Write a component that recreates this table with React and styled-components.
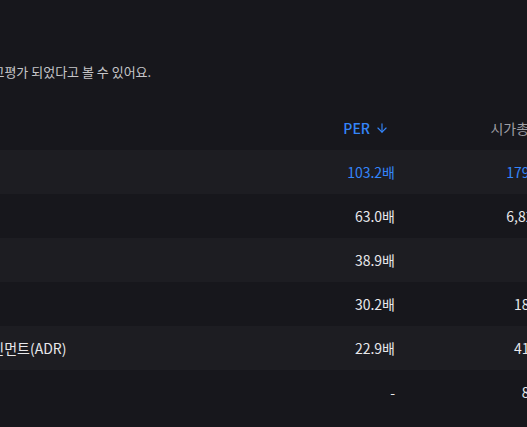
import React from "react";
import styled, { createGlobalStyle } from "styled-components";
import { ArrowDown } from "lucide-react";

const GlobalStyle = createGlobalStyle`
  html, body {
    margin: 0;
    background: #17171c;
    overflow: hidden;
  }
  body {
    font-family: "Noto Sans CJK KR", "Noto Sans", sans-serif;
  }
`;

const Page = styled.div`
  width: 760px;
  height: 427px;
  margin-left: -170px;
  padding-top: 62px;
  box-sizing: border-box;
`;

const Subtitle = styled.p`
  margin: 0 0 24px;
  padding-left: 58px;
  font-size: 13px;
  line-height: 20px;
  color: #c6c6c9;
  white-space: nowrap;
`;

const Table = styled.div`
  display: grid;
  grid-template-columns: 1fr 120px 172px;
  padding-right: 23px;
`;

const Row = styled.div`
  display: contents;
  color: ${(p) => (p.$active ? "#3485fa" : "#e8e8eb")};

  & > div {
    background: ${(p) => (p.$striped ? "#1d1d22" : "transparent")};
  }
`;

const Cell = styled.div`
  height: 44px;
  display: flex;
  align-items: center;
  justify-content: ${(p) => (p.$right ? "flex-end" : "flex-start")};
  padding-left: ${(p) => (p.$right ? "0" : "52px")};
  font-size: 14px;
  white-space: nowrap;
`;

const HeadCell = styled(Cell)`
  color: ${(p) => (p.$sorted ? "#3485fa" : "#9e9ea4")};
  font-weight: ${(p) => (p.$sorted ? 500 : 400)};
  gap: 5px;
  padding-right: ${(p) => p.$pad || 0}px;
`;

const rows = [
  { name: "스포티파이", per: "103.2배", cap: "179.2조원", active: true },
  { name: "워너 뮤직 그룹", per: "63.0배", cap: "6,823억원" },
  { name: "라이언스게이트", per: "38.9배", cap: "-" },
  { name: "시리우스XM", per: "30.2배", cap: "18.5조원" },
  { name: "텐센트 뮤직 엔터테인먼트(ADR)", per: "22.9배", cap: "41.2조원" },
  { name: "파라마운트", per: "-", cap: "8.6조원" },
];

export default function App() {
  return (
    <>
      <GlobalStyle />
      <Page>
        <Subtitle>이익에 비해 주가가 고평가 되었다고 볼 수 있어요.</Subtitle>
        <Table>
          <HeadCell>종목</HeadCell>
          <HeadCell $right $sorted $pad={6}>
            PER
            <ArrowDown size={14} strokeWidth={2} />
          </HeadCell>
          <HeadCell $right $pad={25}>
            시가총액
          </HeadCell>
          {rows.map((r, i) => (
            <Row key={r.name} $striped={i % 2 === 0} $active={r.active}>
              <Cell>{r.name}</Cell>
              <Cell $right>{r.per}</Cell>
              <Cell $right>{r.cap}</Cell>
            </Row>
          ))}
        </Table>
      </Page>
    </>
  );
}
